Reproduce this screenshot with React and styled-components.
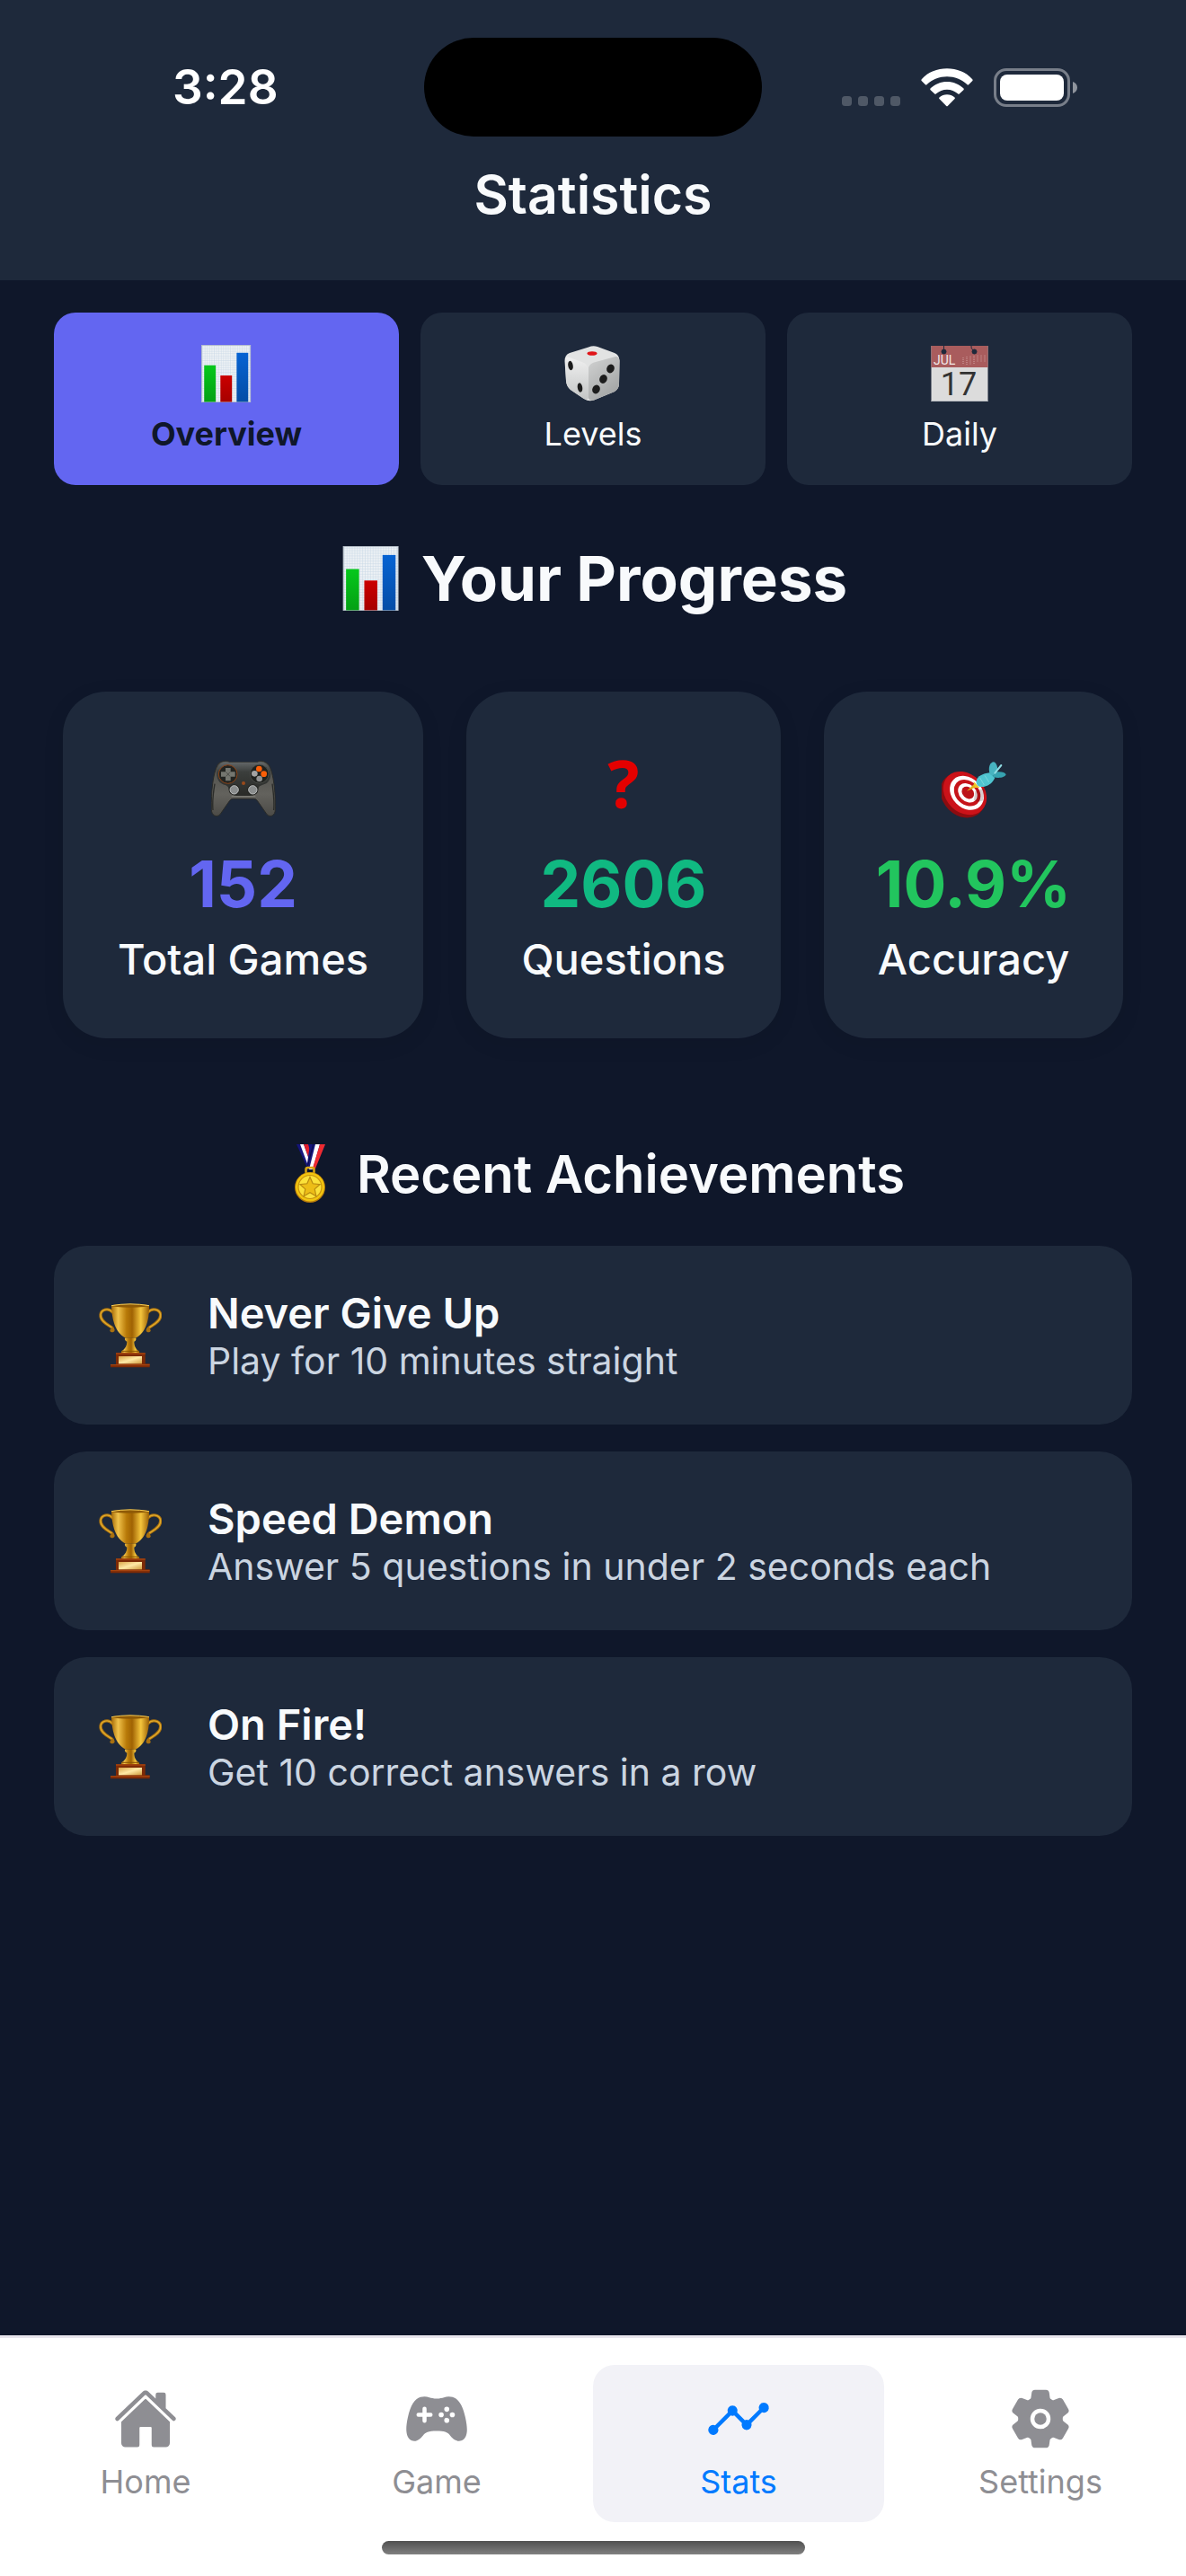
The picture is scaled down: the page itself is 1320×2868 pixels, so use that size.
import React, { useState } from "react";
import styled, { createGlobalStyle } from "styled-components";
import { IoHome, IoGameController, IoAnalytics, IoSettings } from "react-icons/io5";

const color = {
  page: "#0f172a",
  surface: "#1e293b",
  text: "#f8fafc",
  muted: "#cbd5e1",
  primary: "#6366f1",
  teal: "#10b981",
  green: "#22c55e",
  navIdle: "#8e8e93",
  navActive: "#007aff",
};

const GlobalStyle = createGlobalStyle`
  *, *::before, *::after { box-sizing: border-box; }
  body {
    margin: 0;
    background: ${color.page};
    color: ${color.text};
    font-family: Inter, "Liberation Sans", sans-serif;
  }
  h1, h2, h3, p, ul { margin: 0; padding: 0; }
  button { font: inherit; border: 0; cursor: pointer; }
  svg { display: block; flex: none; }
`;

const Screen = styled.div`
  display: flex;
  flex-direction: column;
  min-height: 100vh;
`;

/* ---------- header ---------- */

const Header = styled.header`
  background: ${color.surface};
  padding-bottom: 59px;
`;

const StatusBar = styled.div`
  display: grid;
  grid-template-columns: 1fr 376px 1fr;
  align-items: center;
  padding-top: 42px;
`;

const Clock = styled.time`
  padding-left: 192px;
  font-size: 53px;
  line-height: 60px;
  font-weight: 600;
  color: #fff;
`;

const Island = styled.div`
  height: 110px;
  border-radius: 55px;
  background: #000;
`;

const StatusIcons = styled.div`
  display: flex;
  justify-content: flex-end;
  align-items: flex-end;
  gap: 23px;
  padding-right: 120px;
`;

const Title = styled.h1`
  padding-top: 29px;
  text-align: center;
  font-size: 59px;
  line-height: 72px;
  font-weight: 600;
`;

/* ---------- tabs ---------- */

const Main = styled.main`
  flex: 1;
  padding: 36px 60px;
`;

const Tabs = styled.div`
  display: grid;
  grid-template-columns: repeat(3, 1fr);
  gap: 24px;
`;

const Tab = styled.button`
  display: flex;
  flex-direction: column;
  align-items: center;
  gap: 14px;
  padding: 36px 0;
  border-radius: 24px;
  background: ${(p) => (p.$active ? color.primary : color.surface)};
  color: ${(p) => (p.$active ? color.page : color.text)};
  && {
    font-size: 36px;
    line-height: 42px;
    font-weight: ${(p) => (p.$active ? 700 : 400)};
  }
`;

/* ---------- progress ---------- */

const Heading = styled.h2`
  display: flex;
  justify-content: center;
  align-items: center;
  gap: 20px;
  padding: 62px 0 84px;
  font-size: 69px;
  line-height: 84px;
  font-weight: 700;
`;

const StatGrid = styled.div`
  display: grid;
  grid-template-columns: 401fr 350fr 333fr;
  gap: 48px;
  padding: 0 10px;
`;

const StatCard = styled.div`
  display: flex;
  flex-direction: column;
  align-items: center;
  padding: 72px 0 58px;
  border-radius: 48px;
  background: ${color.surface};
  box-shadow: 0 6px 24px rgba(0, 0, 0, 0.08);
`;

const QuestionMark = styled.span`
  height: 72px;
  line-height: 60px;
  font-family: "Open Sans", "Noto Sans", sans-serif;
  font-size: 74px;
  font-weight: 700;
  color: #e30000;
`;

const StatValue = styled.strong`
  padding: 28px 0 12px;
  font-size: 71px;
  line-height: 84px;
  font-weight: 700;
  color: ${(p) => p.$tone};
`;

const StatLabel = styled.span`
  font-size: 47px;
  line-height: 60px;
  font-weight: 500;
`;

/* ---------- achievements ---------- */

const SubHeading = styled.h2`
  display: flex;
  justify-content: center;
  align-items: center;
  gap: 20px;
  padding: 115px 0 44px;
  font-size: 58px;
  line-height: 72px;
  font-weight: 600;
`;

const AchievementList = styled.ul`
  display: grid;
  gap: 30px;
  list-style: none;
`;

const Achievement = styled.li`
  display: flex;
  align-items: center;
  gap: 51px;
  padding: 46px 48px 45px;
  border-radius: 36px;
  background: ${color.surface};
`;

const AchievementName = styled.h3`
  font-size: 47px;
  line-height: 57px;
  font-weight: 600;
`;

const AchievementText = styled.p`
  font-size: 41px;
  line-height: 51px;
  color: ${color.muted};
`;

/* ---------- bottom navigation ---------- */

const BottomBar = styled.footer`
  display: flex;
  flex-direction: column;
  align-items: center;
  gap: 21px;
  padding: 30px 0 24px;
  border-top: 3px solid #e7e4ec;
  background: #fff;
`;

const Nav = styled.nav`
  display: flex;
  width: 100%;
`;

const NavItem = styled.a`
  flex: 1;
  display: flex;
  flex-direction: column;
  align-items: center;
  gap: 12px;
  margin: ${(p) => (p.$active ? "0 12px" : "0")};
  padding: 24px 0 23px;
  border-radius: 24px;
  background: ${(p) => (p.$active ? "#f2f2f7" : "transparent")};
  color: ${(p) => (p.$active ? color.navActive : color.navIdle)};
  font-size: 36px;
  line-height: 44px;
  text-decoration: none;
`;

const HomeIndicator = styled.div`
  width: 471px;
  height: 15px;
  border-radius: 8px;
  background: linear-gradient(#505050, #808080);
`;

/* ---------- drawings ---------- */

const SignalDots = () => (
  <svg width="65" height="12" viewBox="0 0 65 12" fill="#fff" fillOpacity="0.22" aria-hidden="true">
    {[0, 18, 36, 54].map((x) => (
      <rect key={x} x={x} width="11" height="11" rx="3.5" />
    ))}
  </svg>
);

const Wifi = () => (
  <svg width="58" height="43" viewBox="314 44 174 129" fill="#fff" aria-hidden="true">
    <path d="M316 86 Q314 83 317 80 C338 57 368 45 401 45 C434 45 464 57 485 80 Q488 83 486 86 L474 98 Q471 101 468 98 C450 81 426 72 401 72 C376 72 352 81 334 98 Q331 101 328 98 Z" />
    <path d="M346 117 Q343 114 346 111 C361 97 380 89 401 89 C422 89 441 97 456 111 Q459 114 456 117 L443 129 Q440 132 437 129 C427 120 415 115 401 115 C387 115 375 120 365 129 Q362 132 359 129 Z" />
    <path d="M376 147 Q372 144 376 141 C383 135 391 132 401 132 C411 132 419 135 426 141 Q430 144 426 147 L404 169 Q401 172 398 169 Z" />
  </svg>
);

const Battery = () => (
  <svg width="94" height="43" viewBox="0 0 94 43" aria-hidden="true">
    <rect x="1.5" y="1.5" width="82" height="40" rx="12.5" fill="none" stroke="#fff" strokeOpacity="0.4" strokeWidth="3" />
    <rect x="7" y="7" width="71" height="29" rx="8" fill="#fff" />
    <path d="M88 15 C91 16 93 18.500 93 21.500 C93 24.500 91 27 88 28 Z" fill="#fff" fillOpacity="0.5" />
  </svg>
);

const ChartIcon = ({ size }) => (
  <svg width={size} height={size} viewBox="0 1 62 62" aria-hidden="true">
    <defs>
      <pattern id="chartGrid" width="2.5" height="2.5" patternUnits="userSpaceOnUse">
        <rect width="2.5" height="2.5" fill="#eef2f5" />
        <path d="M0 0H2.500M0 0V2.500" stroke="#c3d5e4" strokeWidth="0.8" />
      </pattern>
      <linearGradient id="barGreen" x2="0" y2="1"><stop stopColor="#06c81c" /><stop offset="1" stopColor="#04a014" /></linearGradient>
      <linearGradient id="barRed" x2="0" y2="1"><stop stopColor="#cb0000" /><stop offset="1" stopColor="#a60000" /></linearGradient>
      <linearGradient id="barBlue" x2="0" y2="1"><stop stopColor="#0663d3" /><stop offset="1" stopColor="#044da6" /></linearGradient>
    </defs>
    <rect x="4.400" y="1.400" width="52.500" height="61.200" fill="url(#chartGrid)" stroke="#b4bec8" strokeWidth="0.8" />
    <rect x="7" y="23" width="12.500" height="39.500" fill="url(#barGreen)" />
    <rect x="24.500" y="34" width="12.500" height="28.500" fill="url(#barRed)" />
    <rect x="42" y="9.500" width="12.500" height="53" fill="url(#barBlue)" />
  </svg>
);

const DiceIcon = () => (
  <svg width="64" height="64" viewBox="0 0 64 64" aria-hidden="true">
    <defs>
      <linearGradient id="diceRight" x2="0.600" y2="1"><stop stopColor="#d2d3d3" /><stop offset="1" stopColor="#a3a5a5" /></linearGradient>
      <linearGradient id="diceLeft" x2="0" y2="1"><stop stopColor="#f0f0f0" /><stop offset="1" stopColor="#c4c6c6" /></linearGradient>
    </defs>
    <path d="M27 2.500 Q32 .5 37 2 L56 9 Q61 11 61.500 17 L61 43 Q61 49 56 52 L33 61.500 Q27 63.500 22 60 L7 50 Q2.500 46 2 40 L.5 18 Q.5 11 6 9 Z" fill="#e2e3e3" />
    <path d="M27 25 Q29 20 35 19 L57 13 Q61 12.500 61.500 18 L61 43 Q61 49 56 52 L33 61.500 Q28 63 26.500 58 Z" fill="url(#diceRight)" />
    <path d="M1 16 Q2 12 6 14 L22 20 Q26 22 27 27 L27 57 Q27 63 21 59.500 L7 50 Q2.500 46 2 40 Z" fill="url(#diceLeft)" />
    <ellipse cx="31" cy="9.500" rx="5.500" ry="2.300" fill="#e01418" />
    <g fill="#1c1c1c">
      <ellipse cx="7" cy="23" rx="2.700" ry="5.200" transform="rotate(-10 7 23)" />
      <ellipse cx="17.500" cy="47.500" rx="2.700" ry="5.200" transform="rotate(-10 17.500 47.500)" />
      <ellipse cx="51.500" cy="26.500" rx="4.200" ry="5" transform="rotate(25 51.500 26.500)" />
      <ellipse cx="43.500" cy="38" rx="4.200" ry="5" transform="rotate(25 43.500 38)" />
      <ellipse cx="35.500" cy="49.500" rx="4.200" ry="5" transform="rotate(25 35.500 49.500)" />
    </g>
  </svg>
);

const CalendarIcon = () => (
  <svg width="64" height="64" viewBox="0 0 64 64" overflow="visible" aria-hidden="true">
    <rect x=".5" y="1" width="63" height="62" fill="#dcdcdc" />
    <rect x=".5" y="1" width="63" height="24" fill="#a95c5d" />
    <g fill={color.surface} stroke={color.surface}>
      <circle cx="14.500" cy="7.500" r="2.500" />
      <circle cx="48.500" cy="7.500" r="2.500" />
      <path d="M14.500 1v5M45 1q-.5 3 2 5" fill="none" strokeWidth="1" />
    </g>
    <path d="M36 14v8M40 13v9M44 12.500v9M48 12v9M52 11.500v8M56 11.500v8M60 11.500v7" stroke="#d3a4a4" strokeWidth="1" strokeDasharray="1 1" />
    <text x="3" y="22" fontFamily="Roboto, sans-serif" fontSize="14" fill="#f3e8e8">JUL</text>
    <text x="31" y="56" textAnchor="middle" fontFamily="Roboto, sans-serif" fontSize="36" fill="#333">17</text>
    <rect x=".5" y="62" width="63" height="1" fill="#b9bcc0" />
  </svg>
);

const GamepadIcon = () => (
  <svg width="72" height="72" viewBox="28 12 216 216" aria-hidden="true">
    <defs>
      <linearGradient id="padGrip" x2="0" y2="1"><stop stopColor="#4a4a46" /><stop offset="0.6" stopColor="#63625d" /><stop offset="1" stopColor="#4c4b47" /></linearGradient>
      <linearGradient id="padTop" x2="0" y2="1"><stop stopColor="#65696a" /><stop offset="0.3" stopColor="#3b3e3c" /><stop offset="1" stopColor="#292a27" /></linearGradient>
    </defs>
    <path d="M50 40 C56 30 70 26 86 28 L88 32 H183 L186 28 C202 26 216 32 222 44 C236 68 243 130 242 190 C242 210 226 218 214 206 L182 160 Q178 154 170 154 H102 Q94 154 90 160 L58 206 C46 218 29 210 29 190 C28 130 34 68 50 40 Z" fill="url(#padGrip)" stroke="#2a2b28" strokeWidth="3" />
    <path d="M62 34 Q74 28 88 32 H183 Q202 28 212 38 C230 52 232 84 216 100 C206 108 194 108 188 114 C182 136 170 144 160 144 H112 C102 144 90 136 84 114 C78 106 66 108 56 98 C42 82 42 50 62 34 Z" fill="url(#padTop)" />
    <path d="M96 146 H176" stroke="#81817a" strokeWidth="3" />
    <path d="M40 104 C34 140 32 170 34 192 M232 104 C237 140 239 170 237 192" fill="none" stroke="#2b2c29" strokeWidth="4" />
    <circle cx="84" cy="72" r="31" fill="#222421" stroke="#8a4318" strokeWidth="3" />
    <path d="M76 51 h17 v13 h15 v16 h-15 v14 h-17 v-14 h-15 v-16 h15 Z" fill="#74766f" />
    <path d="M78 65 l13 14 M91 65 l-13 14" stroke="#3b3c38" strokeWidth="2" />
    <circle cx="189" cy="71" r="31" fill="#20221f" stroke="#545751" strokeWidth="2" />
    <circle cx="188" cy="54" r="10" fill="#fb5f08" />
    <circle cx="204" cy="71" r="10" fill="#fb5f08" />
    <circle cx="173" cy="70" r="10" fill="#a3a4a4" />
    <circle cx="189" cy="87" r="10" fill="#929393" />
    <circle cx="136" cy="102" r="6" fill="#9a4a1b" />
    <circle cx="105" cy="124" r="18" fill="#1f201d" />
    <circle cx="105" cy="124" r="14" fill="#8b8e8e" stroke="#bdbfbf" strokeWidth="3" />
    <circle cx="167" cy="124" r="18" fill="#1f201d" />
    <circle cx="167" cy="124" r="14" fill="#8b8e8e" stroke="#bdbfbf" strokeWidth="3" />
  </svg>
);

const TargetIcon = () => (
  <svg width="72" height="72" viewBox="22 12 216 216" aria-hidden="true">
    <g transform="rotate(45 97 138)">
      <ellipse cx="97" cy="144" rx="82" ry="67" fill="#8c0c10" />
      <ellipse cx="97" cy="134" rx="80" ry="64" fill="#cb1219" />
      <ellipse cx="101" cy="129" rx="63" ry="50" fill="#fff" />
      <ellipse cx="102" cy="128" rx="49" ry="39" fill="#c6141a" />
      <ellipse cx="103" cy="127" rx="36" ry="28" fill="#fff" />
      <ellipse cx="103" cy="126" rx="23" ry="18" fill="#bd1218" />
    </g>
    <path d="M134 128 L166 118 L160 160 Q140 168 130 158 Z" fill="#40000a" fillOpacity="0.2" />
    <path d="M106 128 L134 101 L139 114 Z" fill="#e5b31a" />
    <path d="M129 96 L149 117 L133 117 Z" fill="#f0c52c" />
    <path d="M138 94 C142 78 158 70 183 67 L200 84 C190 104 174 116 150 114 C142 112 136 104 138 94 Z" fill="#4fc4d0" />
    <path d="M183 72 C176 48 184 32 196 31 C206 34 212 52 206 68 L192 78 Z" fill="#47b3c0" />
    <path d="M192 78 L206 64 C222 62 234 66 237 73 C232 84 212 86 196 82 Z" fill="#36a2b0" />
    <path d="M200 68 L221 42" stroke="#8fdce3" strokeWidth="6" strokeLinecap="round" />
    <path d="M150 84 l14 24 M166 76 l14 22" stroke="#79d6de" strokeWidth="3" />
  </svg>
);

const TrophyIcon = () => (
  <svg width="72" height="72" viewBox="24 30 216 216" aria-hidden="true">
    <defs>
      <linearGradient id="cup"><stop stopColor="#a86c08" /><stop offset="0.18" stopColor="#f0c24a" /><stop offset="0.4" stopColor="#b87a08" /><stop offset="0.55" stopColor="#a06303" /><stop offset="0.78" stopColor="#f4c53c" /><stop offset="1" stopColor="#9a5f05" /></linearGradient>
      <linearGradient id="plate" x2="1" y2="1"><stop stopColor="#d9a548" /><stop offset="0.5" stopColor="#ffe9a6" /><stop offset="1" stopColor="#cf9a3c" /></linearGradient>
    </defs>
    <g fill="none" strokeLinecap="round">
      <path d="M76 60 C62 44 38 50 36 68 C34 90 60 102 72 110 C80 116 80 124 72 121" stroke="#a8700f" strokeWidth="10" />
      <path d="M76 60 C62 44 38 50 36 68 C34 90 60 102 72 110" stroke="#e2ab2c" strokeWidth="4" />
      <path d="M194 60 C208 44 234 50 236 68 C238 90 212 102 200 110 C192 116 190 124 198 121" stroke="#a8700f" strokeWidth="10" />
      <path d="M194 60 C208 44 234 50 236 68 C238 90 212 102 200 110" stroke="#e2ab2c" strokeWidth="4" />
    </g>
    <path d="M72 38 Q135 26 198 38 C198 82 190 126 152 146 H120 C82 126 74 82 72 38 Z" fill="url(#cup)" />
    <ellipse cx="135" cy="38" rx="63" ry="6" fill="#8f5a06" />
    <path d="M72 38 Q135 27 198 38" fill="none" stroke="#f4cb55" strokeWidth="3" />
    <path d="M117 146 H154 Q156 154 148 158 C148 172 152 182 164 190 Q168 198 164 200 H106 Q102 198 106 190 C118 182 124 172 124 158 Q115 154 117 146 Z" fill="url(#cup)" />
    <path d="M106 190 H164" stroke="#8a5404" strokeWidth="3" />
    <path d="M87 196 H185 V232 H200 V244 H69 V234 H87 Z" fill="#7d2a06" />
    <path d="M87 198 H185 M69 236 H200" stroke="#a4430f" strokeWidth="4" />
    <rect x="96" y="207" width="78" height="25" fill="url(#plate)" />
  </svg>
);

const MedalIcon = () => (
  <svg width="64" height="66" viewBox="0 0 64 66" aria-hidden="true">
    <path d="M17 0 H36 L34 24 L28 24 Z" fill="#15157c" />
    <path d="M21 0 H25 L32 20 L30 24 Z" fill="#fff" />
    <path d="M25 0 H30 L34 14 L32 19 Z" fill="#e3202b" />
    <path d="M32 0 H49 L37 28 L28 28 Z" fill="#15157c" />
    <path d="M38 0 H43 L35 28 L31 28 Z" fill="#fff" />
    <path d="M43 0 H49 L38 27 L34.500 28 Z" fill="#ee2b30" />
    <path d="M35.500 0 L29.500 24" stroke="#0b0b45" strokeWidth="1" />
    <rect x="27.500" y="26" width="9" height="7" rx="2" fill="none" stroke="#d9a613" strokeWidth="2.500" />
    <circle cx="32" cy="48" r="17" fill="#b87a0c" />
    <circle cx="32" cy="47.500" r="16" fill="#f1c40f" />
    <circle cx="32" cy="47.500" r="13" fill="#fbe13a" stroke="#c9920f" strokeWidth="1.200" />
    <path d="M32 36.500 l3.200 7.300 7.900 .8 -5.900 5.300 1.700 7.800 -6.900 -4 -6.900 4 1.700 -7.800 -5.900 -5.300 7.900 -.8 Z" fill="#edbd17" stroke="#b98a10" strokeWidth="1.200" />
  </svg>
);

/* ---------- content ---------- */

const tabs = [
  { id: "overview", label: "Overview", icon: <ChartIcon size={64} /> },
  { id: "levels", label: "Levels", icon: <DiceIcon /> },
  { id: "daily", label: "Daily", icon: <CalendarIcon /> },
];

const stats = [
  { label: "Total Games", value: "152", tone: color.primary, icon: <GamepadIcon /> },
  { label: "Questions", value: "2606", tone: color.teal, icon: <QuestionMark aria-hidden="true">?</QuestionMark> },
  { label: "Accuracy", value: "10.9%", tone: color.green, icon: <TargetIcon /> },
];

const achievements = [
  { name: "Never Give Up", text: "Play for 10 minutes straight" },
  { name: "Speed Demon", text: "Answer 5 questions in under 2 seconds each" },
  { name: "On Fire!", text: "Get 10 correct answers in a row" },
];

const navItems = [
  { label: "Home", Icon: IoHome },
  { label: "Game", Icon: IoGameController },
  { label: "Stats", Icon: IoAnalytics },
  { label: "Settings", Icon: IoSettings },
];

export default function App() {
  const [tab, setTab] = useState("overview");

  return (
    <Screen>
      <GlobalStyle />
      <Header>
        <StatusBar>
          <Clock>3:28</Clock>
          <Island />
          <StatusIcons>
            <SignalDots />
            <Wifi />
            <Battery />
          </StatusIcons>
        </StatusBar>
        <Title>Statistics</Title>
      </Header>

      <Main>
        <Tabs role="tablist">
          {tabs.map(({ id, label, icon }) => (
            <Tab key={id} type="button" role="tab" aria-selected={tab === id} $active={tab === id} onClick={() => setTab(id)}>
              {icon}
              {label}
            </Tab>
          ))}
        </Tabs>

        <Heading>
          <ChartIcon size={72} />
          Your Progress
        </Heading>
        <StatGrid>
          {stats.map(({ label, value, tone, icon }) => (
            <StatCard key={label}>
              {icon}
              <StatValue $tone={tone}>{value}</StatValue>
              <StatLabel>{label}</StatLabel>
            </StatCard>
          ))}
        </StatGrid>

        <SubHeading>
          <MedalIcon />
          Recent Achievements
        </SubHeading>
        <AchievementList>
          {achievements.map(({ name, text }) => (
            <Achievement key={name}>
              <TrophyIcon />
              <div>
                <AchievementName>{name}</AchievementName>
                <AchievementText>{text}</AchievementText>
              </div>
            </Achievement>
          ))}
        </AchievementList>
      </Main>

      <BottomBar>
        <Nav>
          {navItems.map(({ label, Icon }) => (
            <NavItem key={label} href={`#${label.toLowerCase()}`} $active={label === "Stats"} aria-current={label === "Stats" ? "page" : undefined}>
              <Icon size={72} />
              {label}
            </NavItem>
          ))}
        </Nav>
        <HomeIndicator />
      </BottomBar>
    </Screen>
  );
}
